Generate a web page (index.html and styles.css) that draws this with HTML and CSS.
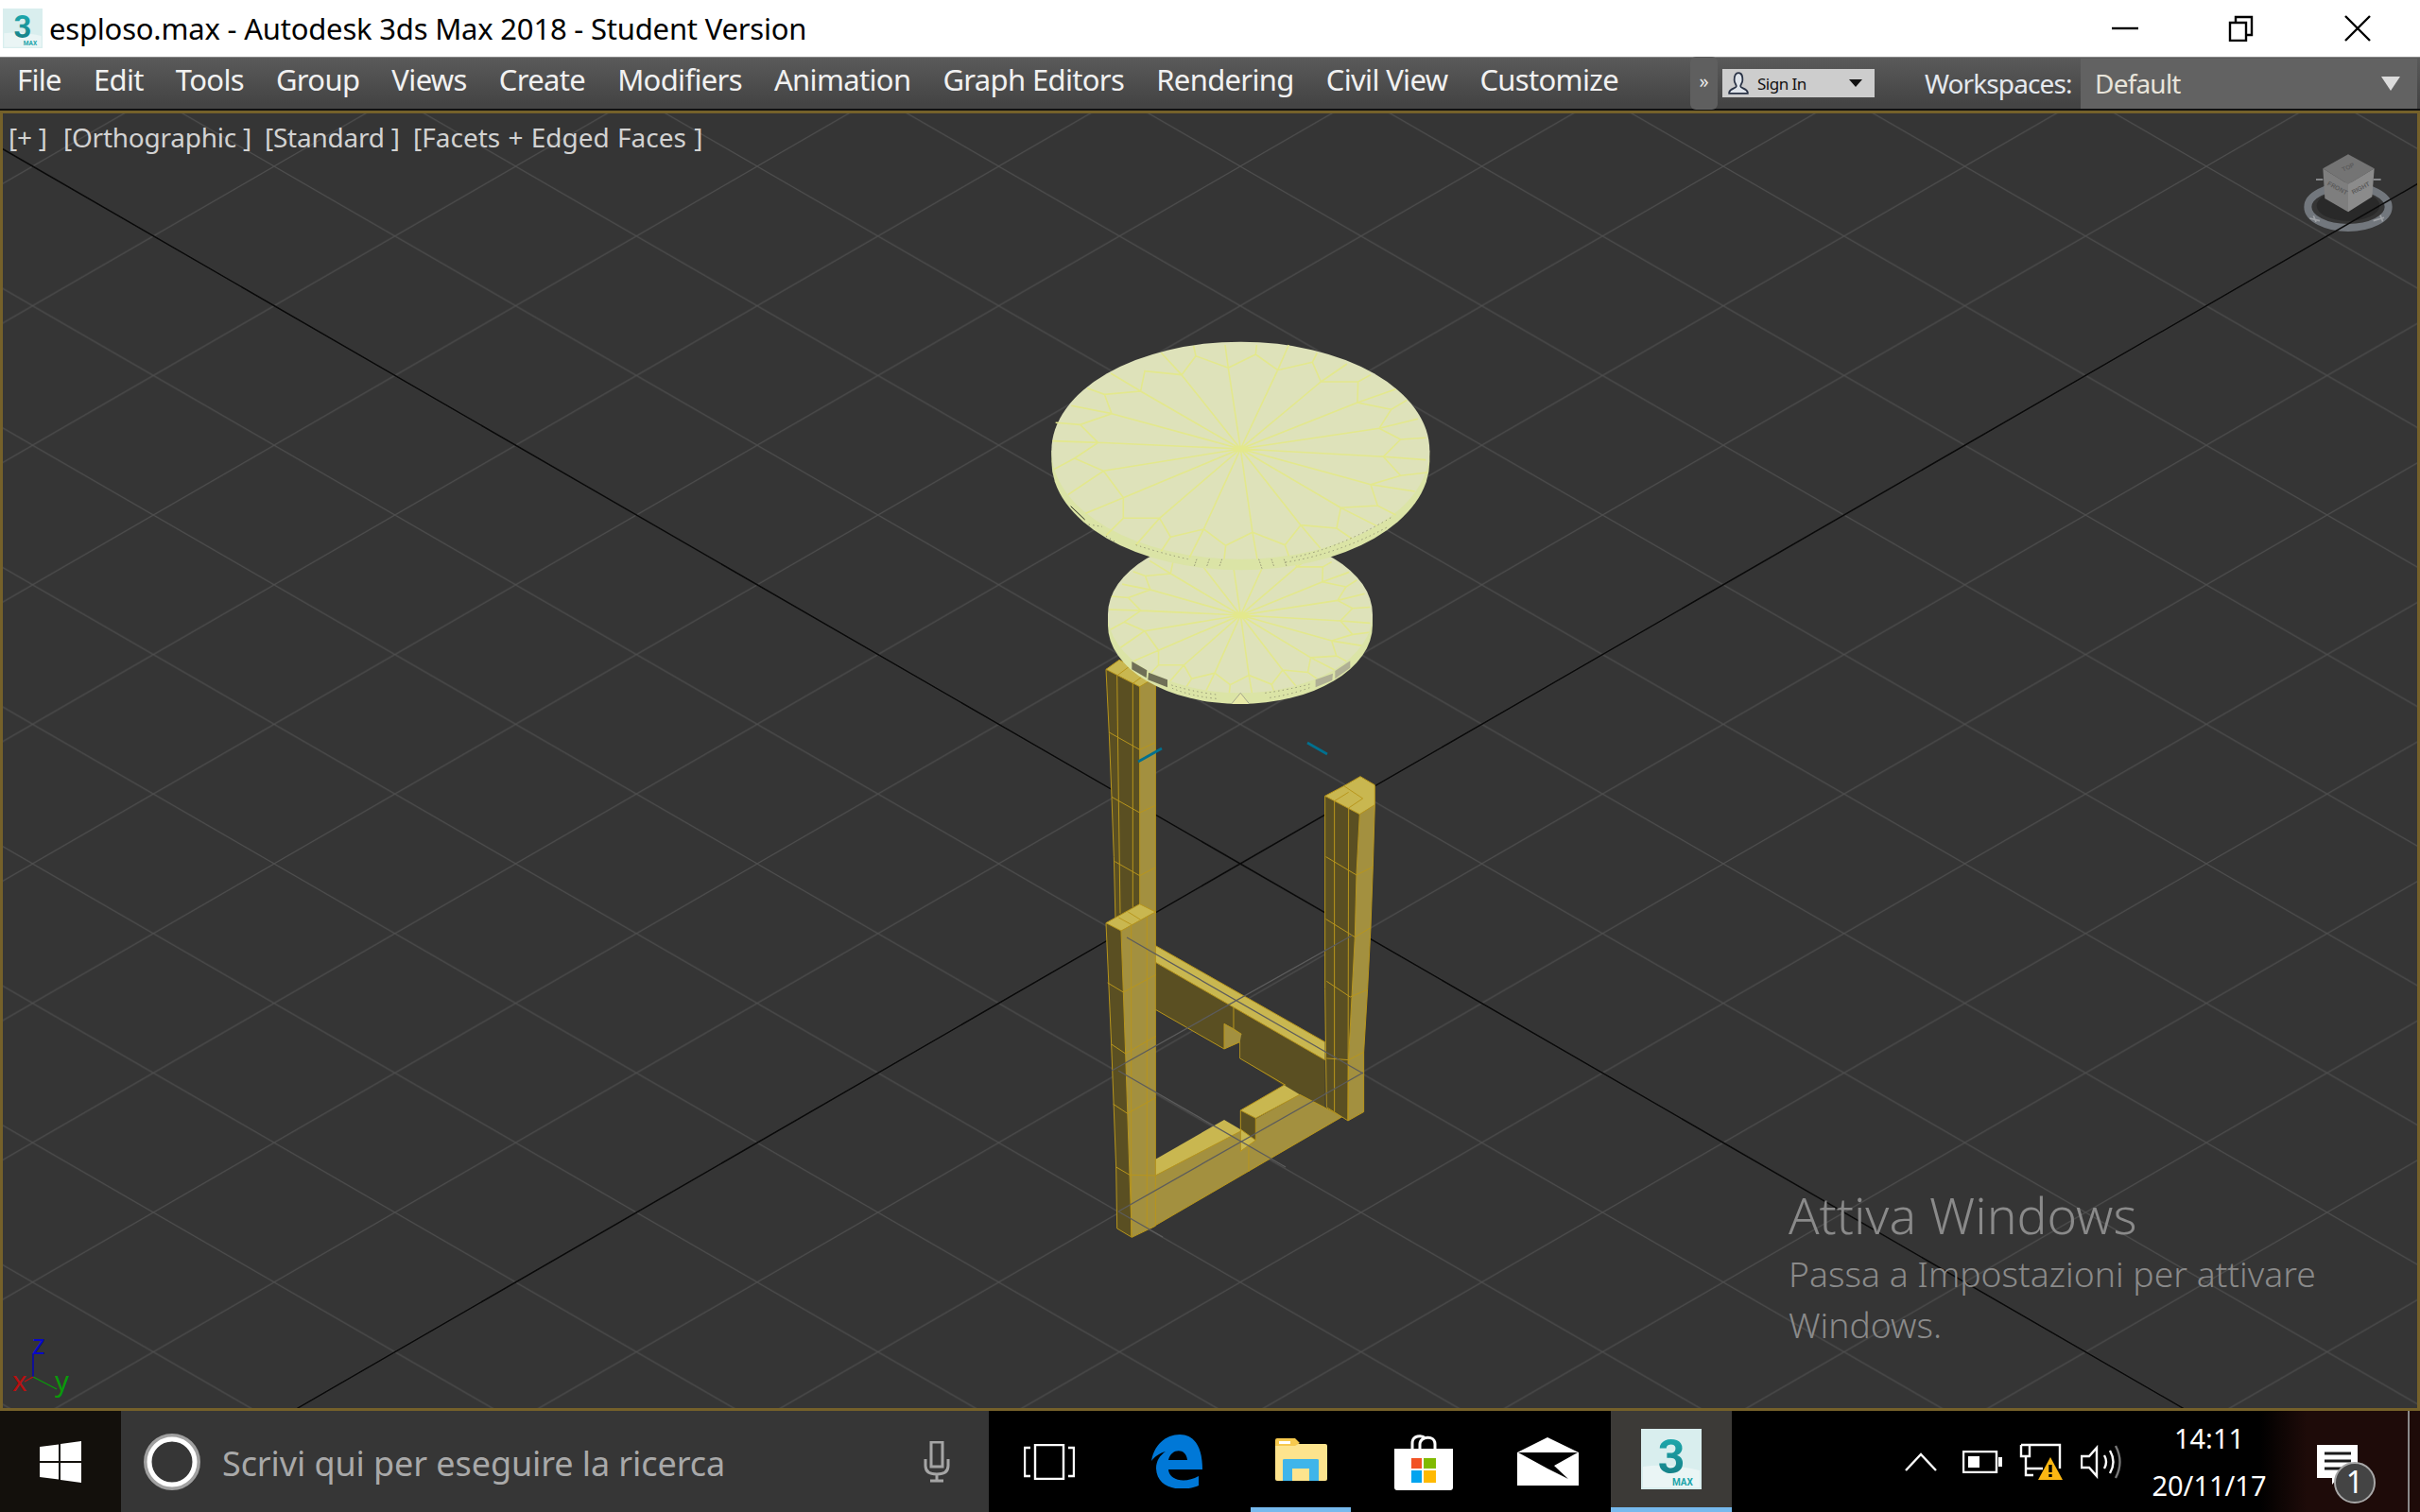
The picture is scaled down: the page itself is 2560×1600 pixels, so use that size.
FILE: index.html
```html
<!DOCTYPE html>
<html lang="en">
<head>
  <meta charset="UTF-8" />
  <title>esploso.max - Autodesk 3ds Max 2018 - Student Version</title>
  <link rel="stylesheet" href="styles.css">
</head>
<body>

  <svg class="defs" width="0" height="0">
    <defs>
      <linearGradient id="teal" x1="0" y1="0" x2="0" y2="1">
        <stop offset="0" stop-color="#1fb0b4" />
        <stop offset="1" stop-color="#14777f" />
      </linearGradient>
    </defs>
    <symbol id="maxlogo" viewBox="0 0 64 64" overflow="visible">
      <rect class="logo-bg" width="64" height="64" />
      <path class="logo-floor" d="M2 40 Q28 36 62 44 V62 H2 Z" />
      <text class="logo-3" x="32" y="47">3</text>
      <text class="logo-max" x="44" y="60">MAX</text>
    </symbol>
    <path id="wire" d="M697 405L658 148M697 405L815 155M697 405L952 192M697 405L1068 258M697 405L1137 340M697 405L1150 430M697 405L1110 518M697 405L1015 592M697 405L888 647M697 405L735 670M697 405L580 660M697 405L440 625M697 405L325 560M697 405L262 475M697 405L245 385M697 405L288 293M697 405L380 222M697 405L510 170M658 148L648 75M658 148L555 110L548 78M555 110L510 170L445 100M510 170L393 158L380 222L285 165M380 222L265 232L210 212M265 232L288 293L160 268M288 293L188 328L110 322M188 328L245 385L100 380M245 385L170 435L105 470M170 435L262 475L150 550M262 475L325 560L205 610M325 560L325 625L270 680M325 625L440 625L365 710M440 625L475 685L445 730M475 685L580 660L535 750M580 660L650 712L645 755M650 712L735 670L750 755M735 670L838 710L850 745M838 710L888 647L950 720M888 647L1002 657L1050 690M1002 657L1015 592L1130 650M1015 592L1132 585L1190 615M1132 585L1110 518L1250 540M1110 518L1205 490L1290 480M1205 490L1150 430L1285 440M1150 430L1205 375L1285 370M1205 375L1137 340L1260 310M1137 340L1175 280L1225 250M1175 280L1068 258L1190 215M1068 258L1070 192L1110 170M1070 192L952 192L1035 135M952 192L925 130L940 100M925 130L815 155L850 75M815 155L745 105L748 75M745 105L658 148" />
  </svg>

  <header class="titlebar">
    <svg class="title-icon"><use href="#maxlogo" /></svg>
    <span class="title-text">esploso.max - Autodesk 3ds Max 2018 - Student Version</span>
    <div class="win-buttons">
      <svg class="win-btn" viewBox="0 0 28 28"><path d="M0 14H28" /></svg>
      <svg class="win-btn" viewBox="0 0 28 28"><path d="M2 8H19V27H2ZM8 8V2H25V21H19" /></svg>
      <svg class="win-btn" viewBox="0 0 28 28"><path d="M1 1L27 27M27 1L1 27" /></svg>
    </div>
  </header>

  <nav class="menubar">
    <ul class="menu">
      <li>File</li><li>Edit</li><li>Tools</li><li>Group</li><li>Views</li><li>Create</li>
      <li>Modifiers</li><li>Animation</li><li>Graph Editors</li><li>Rendering</li>
      <li>Civil View</li><li>Customize</li>
    </ul>
    <div class="overflow">»</div>
    <div class="signin">
      <svg class="signin-user" viewBox="0 0 20 22"><path d="M10 1C6 1 6 5 6 8C6 11 8 12 8 14C8 16 2 16 1 20V21H19V20C18 16 12 16 12 14C12 12 14 11 14 8C14 5 14 1 10 1Z" /></svg>
      <span>Sign In</span>
      <i class="signin-arrow"></i>
    </div>
    <span class="ws-label">Workspaces:</span>
    <div class="ws-box">
      <span>Default</span>
      <i class="ws-arrow"></i>
    </div>
  </nav>

  <main class="viewport">
    <svg class="scene" viewBox="3 120 2554 1370">
      <defs>
        <pattern id="grid" patternUnits="userSpaceOnUse" x="1312" y="914" width="255.5" height="147.6">
          <path class="gridline" d="M0 0L255.5 147.6M0 147.6L255.5 0" />
        </pattern>
        <clipPath id="lowerclip"><ellipse cx="696" cy="930" rx="420" ry="250" /></clipPath>
      </defs>
      <rect x="3" y="120" width="2554" height="1370" fill="url(#grid)" />

      <!-- viewcube -->
      <g transform="translate(2420 145) scale(.3333)">
        <ellipse class="vc-ring" cx="192" cy="222" rx="128" ry="66" />
        <ellipse class="vc-hole" cx="192" cy="218" rx="100" ry="48" />
        <path class="vc-tab" d="M90 135h22M272 135h24M70 258l32 8M272 266l34-10M82 250l8 20M294 248l8 20" />
        <path class="vc-top" d="M192 55L275 100L192 150L112 100Z" />
        <path class="vc-left" d="M112 100L192 150V238L118 195Z" />
        <path class="vc-right" d="M192 150L275 100L268 190L192 238Z" />
        <text class="vc-text" transform="translate(195 102) rotate(-25)">TOP</text>
        <text class="vc-text" transform="translate(155 168) rotate(28)">FRONT</text>
        <text class="vc-text" transform="translate(235 168) rotate(-28)">RIGHT</text>
      </g>

      <path class="axis" d="M0 156L2560 1635M0 1672L2560 193" />

      <!-- back post, rails, front right post -->
      <g transform="translate(1140 680) scale(.3333)">
        <path class="s-dark" d="M90 85L197 140V850L120 880L115 680L108 490L100 290Z" />
        <path class="s-mid" d="M197 140L247 110V860L197 850Z" />
        <path class="s-top" d="M90 85L132 55L247 110L197 140Z" />
        <path class="s-edge" d="M90 85L100 290L108 490L115 680L120 880M90 85L132 55L247 110L197 140ZM197 140V850M247 110V860M125 105L130 500L135 860M175 130V840M100 285L197 340L245 318M108 490L197 540L245 518M118 695L197 740L245 715M125 105L165 75M175 130L215 100" />
      </g>
      <g transform="translate(1140 960) scale(.3333)">
        <path class="s-top" d="M247 122L785 428V485L247 175Z" />
        <path class="s-dark" d="M247 175L785 485V650L517 480V428L465 450L247 325Z" />
        <path class="s-mid" d="M465 370L495 385L520 403L515 428L465 450Z" />
        <path class="s-edge" d="M247 122L785 428M247 175L785 485M247 325L465 450L515 428V480L660 565M465 450V370L520 403M495 318V385" />
        <path class="s-mid" d="M247 852L516 712V775L565 740V672L705 595L840 665L230 1020Z" />
        <path class="s-top" d="M247 800L465 675L516 705V712L247 852Z" />
        <path class="s-top" d="M517 645L655 565L705 595L565 670Z" />
        <path class="s-dark" d="M517 645L565 670V740L517 705Z" />
        <path class="s-top" d="M517 705L565 740L517 775Z" />
        <path class="s-edge" d="M517 645L565 670V740L517 705ZM517 645L655 565M565 670L705 595M517 705V775L565 740M543 760V840M247 852L516 712M705 595L840 665M230 1020L840 665" />
      </g>
      <g transform="translate(1140 680) scale(.3333)">
        <path class="s-dark" d="M785 487L895 545L885 738L880 935L860 1320L858 1518L790 1475L785 1100Z" />
        <path class="s-mid" d="M895 545L943 515L937 712L930 905L920 1100L908 1300V1490L858 1518L860 1320L880 935L885 738Z" />
        <path class="s-top" d="M785 487L845 455L897 425L943 452V515L895 545Z" />
        <path class="s-edge" d="M785 487L845 455L897 425L943 452V515L895 545ZM895 545L885 738L880 935L860 1320L858 1518L908 1490V1300L920 1100L930 905L937 712L943 515M785 487V1100L790 1475L858 1518M815 503V1490M860 525L858 1518M815 503L860 475M860 525L905 495M845 455L905 495M788 680L885 738L937 712M788 878L880 935L930 905M790 1075L865 1125L920 1102M790 1320L860 1325L908 1300" />
      </g>
      <!-- front left post -->
      <g transform="translate(1140 960) scale(.3333)">
        <path class="s-dark" d="M90 50L138 75L152 465L165 850L172 1048L125 1020L122 825L107 435Z" />
        <path class="s-mid" d="M138 75L247 15V1012L172 1048L165 850L152 465Z" />
        <path class="s-top" d="M90 50L197 -10L247 15L138 75Z" />
        <path class="s-edge" d="M90 50L197 -10L247 15L138 75ZM90 50L107 435L122 825L125 1020L172 1048L247 1012V15M138 75L152 465L165 850L172 1048M170 58V1045M220 30V1020M95 240L145 270L247 215M107 435L152 465L247 410M113 625L158 655L247 605M122 825L165 850L247 852M130 33L172 56M160 15L200 40" />
      </g>
      <!-- grid showing through the stool -->
      <path class="through" d="M1192 992L1442 1136M1176 1133L1430 990M1183 1282L1442 1135M1183 1133L1360 1235M1183 1282L1230 1309" />

      <!-- lower disc -->
      <g transform="translate(1080 340) scale(.3333)">
        <path class="d-side" d="M276 930V965A420 250 0 0 0 1116 965V930Z" />
        <ellipse class="d-face" cx="696" cy="930" rx="420" ry="250" />
        <g clip-path="url(#lowerclip)">
          <use href="#wire" class="d-wire" transform="translate(697 933) scale(.7 .72) translate(-697 -405)" />
        </g>
        <path class="d-patch-dark" d="M352 1080L400 1108L398 1132L352 1105Z" />
        <path class="d-patch-dark" d="M405 1115L465 1138V1162L403 1138Z" />
        <path class="d-patch-light" d="M935 1138L990 1118L988 1140L935 1162Z" />
        <path class="d-patch-light" d="M997 1110L1045 1078V1100L997 1135Z" />
        <path class="d-dots" d="M478 1155Q540 1175 620 1185M775 1180Q850 1170 925 1150M480 1165Q540 1190 620 1198M790 1195Q860 1185 925 1160" />
        <path class="d-notch" d="M668 1215L697 1180L725 1215" />
      </g>
      <!-- upper disc -->
      <g transform="translate(1080 340) scale(.3333)">
        <path class="d-side" d="M97 410V445A600 345 0 0 0 1297 445V410Z" />
        <ellipse class="d-face" cx="697" cy="410" rx="600" ry="345" />
        <use href="#wire" class="d-wire" />
        <path class="d-black" d="M158 587L203 630" />
        <path class="d-dots" d="M215 645L258 652M270 682L302 702M365 710Q440 735 530 755M860 750Q1000 725 1180 620M840 765Q1000 740 1160 655" />
        <path class="d-ticks" d="M558 755L550 778M598 755L590 778M638 755L630 778M755 755L765 785M795 755L803 778M835 755L843 778" />
      </g>

      <path class="tick" d="M1204 806L1229 792M1383 786L1404 798" />

      <!-- axis tripod -->
      <path class="gz-z" d="M35 1432V1457" />
      <path class="gz-y" d="M35 1457L60 1470" />
      <path class="gz-x" d="M35 1457L26 1462" />
      <text class="gz-text gz-tz" x="34" y="1433">z</text>
      <text class="gz-text gz-tx" x="13" y="1472">x</text>
      <text class="gz-text gz-ty" x="58" y="1472">y</text>
    </svg>

    <div class="vp-labels">
      <span class="vp-plus">[+ ]</span>
      <span class="vp-ortho">[Orthographic ]</span>
      <span class="vp-std">[Standard ]</span>
      <span class="vp-shade">[Facets + Edged Faces ]</span>
    </div>

    <div class="activate">
      <div class="activate-title">Attiva Windows</div>
      <div class="activate-text">Passa a Impostazioni per attivare<br>Windows.</div>
    </div>
  </main>

  <footer class="taskbar">
    <div class="start">
      <svg class="win-logo" viewBox="0 0 44 44"><path d="M0 6L20 3.5V21H0ZM22 3L44 0V21H22ZM0 23H20V40.5L0 38ZM22 23H44V44L22 41Z" /></svg>
    </div>
    <div class="search">
      <svg class="cortana" viewBox="0 0 60 60"><circle class="cortana-out" cx="30" cy="30" r="26" /><circle class="cortana-in" cx="30" cy="30" r="24" /></svg>
      <span class="search-text">Scrivi qui per eseguire la ricerca</span>
      <svg class="mic" viewBox="0 0 30 44"><path d="M9 1H21V27H9ZM3 19V26C3 33 9 35 15 35C21 35 27 33 27 26V19M15 35V42M8 42H22" /></svg>
    </div>

    <div class="task task-view">
      <svg class="tv-icon" viewBox="0 0 54 38"><path d="M12 1H42V37H12ZM7 4H1V34H7M47 4H53V34H47" /></svg>
    </div>
    <div class="task task-edge">
      <svg class="edge-icon" viewBox="0 0 54 57"><path fill-rule="evenodd" d="M0 28C3 10 16 0 30 0C46 0 54 14 54 37H18C19 49 36 52 50 44V54C34 61 6 59 5 36C5 28 9 22 15 18C8 20 3 24 0 28ZM18 27H38C37 14 21 14 18 27Z" /></svg>
    </div>
    <div class="task task-explorer">
      <svg class="folder-icon" viewBox="0 0 56 46">
        <path class="f-body" d="M1 7H26L28 7H54Q56 7 56 9V44Q56 46 54 46H3Q1 46 1 44Z" />
        <path class="f-tab" d="M1 3Q1 1 3 1H22L27 6L22 9H1Z" />
        <path class="f-label" d="M5 4H17V7H5Z" />
        <path class="f-blue" d="M9 24Q9 23 11 23H45Q47 23 47 24V46H37V33H19V46H9Z" />
      </svg>
    </div>
    <div class="task task-store">
      <svg class="store-icon" viewBox="0 0 64 60">
        <path class="st-handle" d="M20 18V10C20 2 30 1 34 5M28 18V11C28 3 44 1 44 11V18" />
        <path class="st-bag" d="M1 16H63V57Q63 60 60 60H4Q1 60 1 57Z" />
        <path class="st-r" d="M19 26H30V37H19Z" />
        <path class="st-g" d="M32 26H45V37H32Z" />
        <path class="st-b" d="M19 39H30V52H19Z" />
        <path class="st-y" d="M32 39H45V52H32Z" />
      </svg>
    </div>
    <div class="task task-mail">
      <svg class="mail-icon" viewBox="0 0 65 51">
        <path class="m-white" d="M0 16L32 0L65 16V51H0Z" />
        <path class="m-black" d="M1 16H64L39 30L54 44L32 33Z" />
      </svg>
    </div>
    <div class="task task-max">
      <svg class="max-icon"><use href="#maxlogo" /></svg>
    </div>

    <div class="tray">
      <svg class="chevron" viewBox="0 0 34 20"><path d="M1 19L17 2L33 19" /></svg>
      <svg class="battery" viewBox="0 0 42 24"><path class="bat-line" d="M1 1H36V23H1Z" /><path class="bat-fill" d="M6 6H18V18H6ZM38 7H42V17H38Z" /></svg>
      <svg class="network" viewBox="0 0 44 38">
        <path class="net-line" d="M1 1H42V26M1 1V13H10V1M6 13V33H14M6 26H24" />
        <path class="net-warn" d="M32 14L45 38H19Z" />
        <path class="net-mark" d="M32 22V30M32 32V35" />
      </svg>
      <svg class="volume" viewBox="0 0 44 36">
        <path class="vol-line" d="M1 12H9L17 3V33L9 24H1ZM25 11Q29 18 25 25M31 6Q38 18 31 30" />
        <path class="vol-dim" d="M37 1Q46 18 37 35" />
      </svg>
      <div class="clock">
        <div>14:11</div>
        <div>20/11/17</div>
      </div>
      <svg class="notif" viewBox="0 0 66 66">
        <path class="nt-bubble" d="M0 0H43V35H22L16 42V35H0Z" />
        <path class="nt-line" d="M8 9H36M8 17H36M8 25H30" />
        <circle class="nt-badge" cx="40" cy="40" r="21" />
        <text class="nt-num" x="40" y="51">1</text>
      </svg>
      <div class="tray-end"></div>
    </div>
  </footer>

</body>
</html>
```

FILE: styles.css
```css
* { box-sizing: border-box; }
body {
  margin: 0;
  width: 2560px;
  height: 1600px;
  overflow: hidden;
  display: flex;
  flex-direction: column;
  font-family: 'Noto Sans', sans-serif;
  background: #000;
}
.defs { position: absolute; }

/* title bar */
.titlebar {
  height: 60px;
  background: #fff;
  display: flex;
  align-items: center;
  padding-left: 3px;
  color: #000;
}
.title-icon { width: 42px; height: 42px; overflow: visible; }
.title-text { margin-left: 7px; font-size: 31px; letter-spacing: -0.2px; }
.win-buttons {
  margin-left: auto;
  display: flex;
  gap: 95px;
  margin-right: 52px;
}
.win-btn { width: 28px; height: 28px; fill: none; stroke: #000; stroke-width: 2.4; }

.logo-bg { fill: #d9eeee; }
.logo-floor { fill: #eaf5f5; }
.logo-3 { fill: url(#teal); font: 700 50px 'Roboto', sans-serif; text-anchor: middle; }
.logo-max { fill: #1da5ab; font: 700 10px 'Roboto', sans-serif; text-anchor: middle; }

/* menu */
.menubar {
  height: 57px;
  background: linear-gradient(#5a5a5a, #444 90%);
  border-top: 1px solid #888;
  border-bottom: 2px solid #111;
  display: flex;
  align-items: center;
  color: #f1f1f1;
}
.menu {
  list-style: none;
  margin: 0;
  padding: 0 0 8px 18px;
  display: flex;
  gap: 34px;
  font-size: 31px;
  letter-spacing: -0.66px;
  width: 1788px;
}
.overflow {
  width: 29px;
  height: 56px;
  background: #5f5f5f;
  border-radius: 6px;
  text-align: center;
  font-size: 20px;
  line-height: 52px;
  color: #e8e8e8;
}
.signin {
  margin-left: 5px;
  width: 161px;
  height: 30px;
  background: #cdcdcd;
  color: #111;
  font-size: 17px;
  letter-spacing: -0.5px;
  display: flex;
  align-items: center;
  padding-left: 6px;
}
.signin-user { width: 22px; height: 24px; fill: #dfe4ea; stroke: #2a3346; stroke-width: 1.6; margin-right: 9px; }
.signin-arrow {
  margin-left: auto;
  margin-right: 13px;
  border-left: 7px solid transparent;
  border-right: 7px solid transparent;
  border-top: 8px solid #111;
}
.ws-label { margin-left: 53px; width: 165px; font-size: 28px; letter-spacing: -0.9px; color: #e4e8ee; }
.ws-box {
  width: 356px;
  height: 53px;
  background: #626262;
  display: flex;
  align-items: center;
  padding-left: 15px;
  font-size: 28px;
  letter-spacing: -0.8px;
  color: #e8e4da;
}
.ws-arrow {
  margin-left: auto;
  margin-right: 18px;
  border-left: 10px solid transparent;
  border-right: 10px solid transparent;
  border-top: 15px solid #dcdcdc;
}

/* viewport */
.viewport {
  position: relative;
  height: 1376px;
  background: #353535;
  border: 3px solid #75612a;
  overflow: hidden;
}
.scene { position: absolute; left: 0; top: 0; width: 2554px; height: 1370px; }
.gridline { fill: none; stroke: #4e4e4e; stroke-width: 1.1; }
.axis { fill: none; stroke: #0a0a0a; stroke-width: 1.6; }
.through { fill: none; stroke: #5c5c5c; stroke-width: 1.3; }
.tick { fill: none; stroke: #00708f; stroke-width: 2.6; }

.vc-ring { fill: none; stroke: #72777d; stroke-width: 24; }
.vc-hole { fill: #292929; }
.vc-tab { fill: none; stroke: #9ea1a5; stroke-width: 5; }
.vc-top { fill: #747474; }
.vc-left { fill: #7e7e7e; }
.vc-right { fill: #8b8b8b; }
.vc-text { font: 700 20px 'Liberation Sans', sans-serif; fill: #5c5c5c; text-anchor: middle; }

.s-dark { fill: #5a4f22; }
.s-mid { fill: #a3903f; }
.s-top { fill: #c9b750; }
.s-edge { fill: none; stroke: #b8961c; stroke-width: 3; }

.d-side { fill: #dbe4a6; }
.d-face { fill: #dee2ba; }
.d-wire { fill: none; stroke: #e3e88c; stroke-width: 1.6; }
#wire { vector-effect: non-scaling-stroke; }
.d-patch-dark { fill: #6f6f56; }
.d-patch-light { fill: #b0b095; }
.d-dots { fill: none; stroke: #8e8f70; stroke-width: 3; stroke-dasharray: 4 10; }
.d-ticks { fill: none; stroke: #9a9b78; stroke-width: 3; stroke-dasharray: 5 4; }
.d-black { fill: none; stroke: #23231a; stroke-width: 3; }
.d-notch { fill: #e8eaa8; stroke: #a5a68d; stroke-width: 3; }

.gz-z { stroke: #0000c0; stroke-width: 1.4; fill: none; }
.gz-y { stroke: #0a9a0a; stroke-width: 1.4; fill: none; }
.gz-x { stroke: #c01010; stroke-width: 1.4; fill: none; }
.gz-text { font: 29px 'Noto Sans', sans-serif; }
.gz-tz { fill: #0808c8; }
.gz-tx { fill: #b81010; }
.gz-ty { fill: #0a9a0a; }

.vp-labels {
  position: absolute;
  left: 6px;
  top: 6px;
  display: flex;
  font-size: 28px;
  letter-spacing: -0.25px;
  color: #d2d2d2;
}
.vp-plus { width: 58px; }
.vp-ortho { width: 213px; }
.vp-std { width: 157px; }
.vp-shade { letter-spacing: 0; word-spacing: 1px; }

.activate {
  position: absolute;
  left: 1889px;
  top: 1131px;
  color: #8a8a8a;
  font-weight: 300;
}
.activate-title { font-size: 53.5px; line-height: 70px; }
.activate-text { font-size: 37.3px; line-height: 54px; }

/* taskbar */
.taskbar {
  flex: 1;
  display: flex;
  background: linear-gradient(90deg, #000 2390px, #1e0b09 2440px);
  color: #fff;
}
.start {
  width: 128px;
  background: #13100c;
  padding: 32px 0 0 42px;
}
.win-logo { width: 44px; height: 44px; fill: #fff; display: block; }
.search {
  width: 918px;
  background: #363636;
  display: flex;
  align-items: center;
}
.cortana { width: 60px; height: 60px; margin-left: 24px; fill: none; }
.cortana-out { stroke: #a0a0a0; stroke-width: 8; }
.cortana-in { stroke: #fff; stroke-width: 5; }
.search-text { margin-left: 23px; padding-top: 4px; font-size: 36px; letter-spacing: -0.1px; color: #a9a9a9; }
.mic { width: 30px; height: 44px; margin-left: auto; margin-right: 40px; fill: none; stroke: #a5a5a5; stroke-width: 3; }

.task {
  height: 107px;
  display: flex;
  align-items: center;
  justify-content: center;
}
.task-view { width: 128px; }
.task-edge { width: 142px; }
.task-explorer { width: 106px; margin-left: 7px; border-bottom: 5px solid #76b9ed; }
.task-store { width: 154px; }
.task-mail { width: 108px; }
.task-max { width: 128px; margin-left: 13px; background: #3c3a37; border-bottom: 5px solid #76b9ed; }
.tv-icon { width: 54px; height: 38px; fill: none; stroke: #fff; stroke-width: 2.4; }
.edge-icon { width: 54px; height: 57px; fill: #0078d7; }
.folder-icon { width: 56px; height: 46px; }
.f-tab { fill: #f6c94e; }
.f-body { fill: #fde48d; }
.f-label { fill: #fff; }
.f-blue { fill: #3fb5ea; }
.store-icon { width: 64px; height: 60px; }
.st-handle { fill: none; stroke: #fff; stroke-width: 3; }
.st-bag { fill: #fff; }
.st-r { fill: #f25325; }
.st-g { fill: #80ba01; }
.st-b { fill: #02a4ef; }
.st-y { fill: #ffb902; }
.mail-icon { width: 65px; height: 51px; }
.m-white { fill: #fff; }
.m-black { fill: #000; }
.max-icon { width: 64px; height: 64px; overflow: visible; }

.tray {
  display: flex;
  align-items: center;
  height: 107px;
  margin-left: 183px;
}
.chevron { width: 34px; height: 20px; fill: none; stroke: #fff; stroke-width: 2.4; }
.battery { width: 42px; height: 24px; margin-left: 27px; }
.bat-line { fill: none; stroke: #fff; stroke-width: 2.4; }
.bat-fill { fill: #fff; }
.network { width: 44px; height: 38px; margin-left: 19px; overflow: visible; }
.net-line { fill: none; stroke: #fff; stroke-width: 2.4; }
.net-warn { fill: #fcb713; }
.net-mark { fill: none; stroke: #000; stroke-width: 3.4; }
.volume { width: 44px; height: 36px; margin-left: 20px; }
.vol-line { fill: none; stroke: #fff; stroke-width: 2.4; }
.vol-dim { fill: none; stroke: #777; stroke-width: 2.4; }
.clock {
  width: 184px;
  text-align: center;
  font-size: 29px;
  line-height: 50px;
}
.notif { width: 66px; height: 66px; margin-left: 22px; margin-top: 30px; overflow: visible; }
.nt-bubble { fill: #fff; }
.nt-line { fill: none; stroke: #1a1a1a; stroke-width: 3; }
.nt-badge { fill: #444; stroke: #a8a8a8; stroke-width: 2; }
.nt-num { fill: #fff; font: 32px 'Noto Sans', sans-serif; text-anchor: middle; }
.tray-end { width: 2px; height: 107px; margin-left: 30px; background: #8a8a8a; }
```
